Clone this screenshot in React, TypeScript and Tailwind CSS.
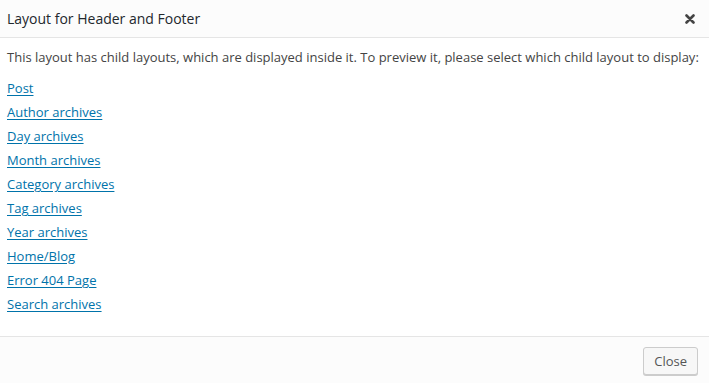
import React from 'react';

const links = [
  'Post',
  'Author archives',
  'Day archives',
  'Month archives',
  'Category archives',
  'Tag archives',
  'Year archives',
  'Home/Blog',
  'Error 404 Page',
  'Search archives',
];

export default function App() {
  return (
    <div className="w-[709px] h-[383px] bg-white flex flex-col text-[#444] font-['Open_Sans',sans-serif] overflow-hidden">
      {/* Header */}
      <div className="h-[38px] shrink-0 bg-[#fcfcfc] border-b border-[#e5e5e5] flex items-center justify-between pl-[7px] pr-[13px]">
        <h1 className="text-[14px] text-[#23282d] font-normal leading-none">Layout for Header and Footer</h1>
        <button className="w-[12px] h-[12px] flex items-center justify-center text-[#444]">
          <svg viewBox="0 0 10 10" className="w-[10px] h-[10px]">
            <path d="M1.5 1.5 L8.5 8.5 M8.5 1.5 L1.5 8.5" stroke="currentColor" strokeWidth="2.6" strokeLinecap="round" />
          </svg>
        </button>
      </div>

      {/* Body */}
      <div className="flex-1 px-[7px] pt-[9px] pb-[20px]">
        <p className="text-[13px] leading-[20px] mb-[9px]">
          This layout has child layouts, which are displayed inside it. To preview it, please select which child layout to display:
        </p>
        <ul>
          {links.map((l) => (
            <li key={l} className="leading-[24px] text-[13px]">
              <a href="#" className="text-[#0073aa] underline underline-offset-[2px]">{l}</a>
            </li>
          ))}
        </ul>
      </div>

      {/* Footer */}
      <div className="h-[47px] shrink-0 bg-[#fcfcfc] border-t border-[#e5e5e5] flex items-start justify-end pt-[10px] pr-[11px]">
        <button className="h-[28px] px-[10px] text-[13px] text-[#555] bg-[#f7f7f7] border border-[#ccc] rounded-[3px] shadow-[0_1px_0_#ccc] leading-[26px]">
          Close
        </button>
      </div>
    </div>
  );
}
